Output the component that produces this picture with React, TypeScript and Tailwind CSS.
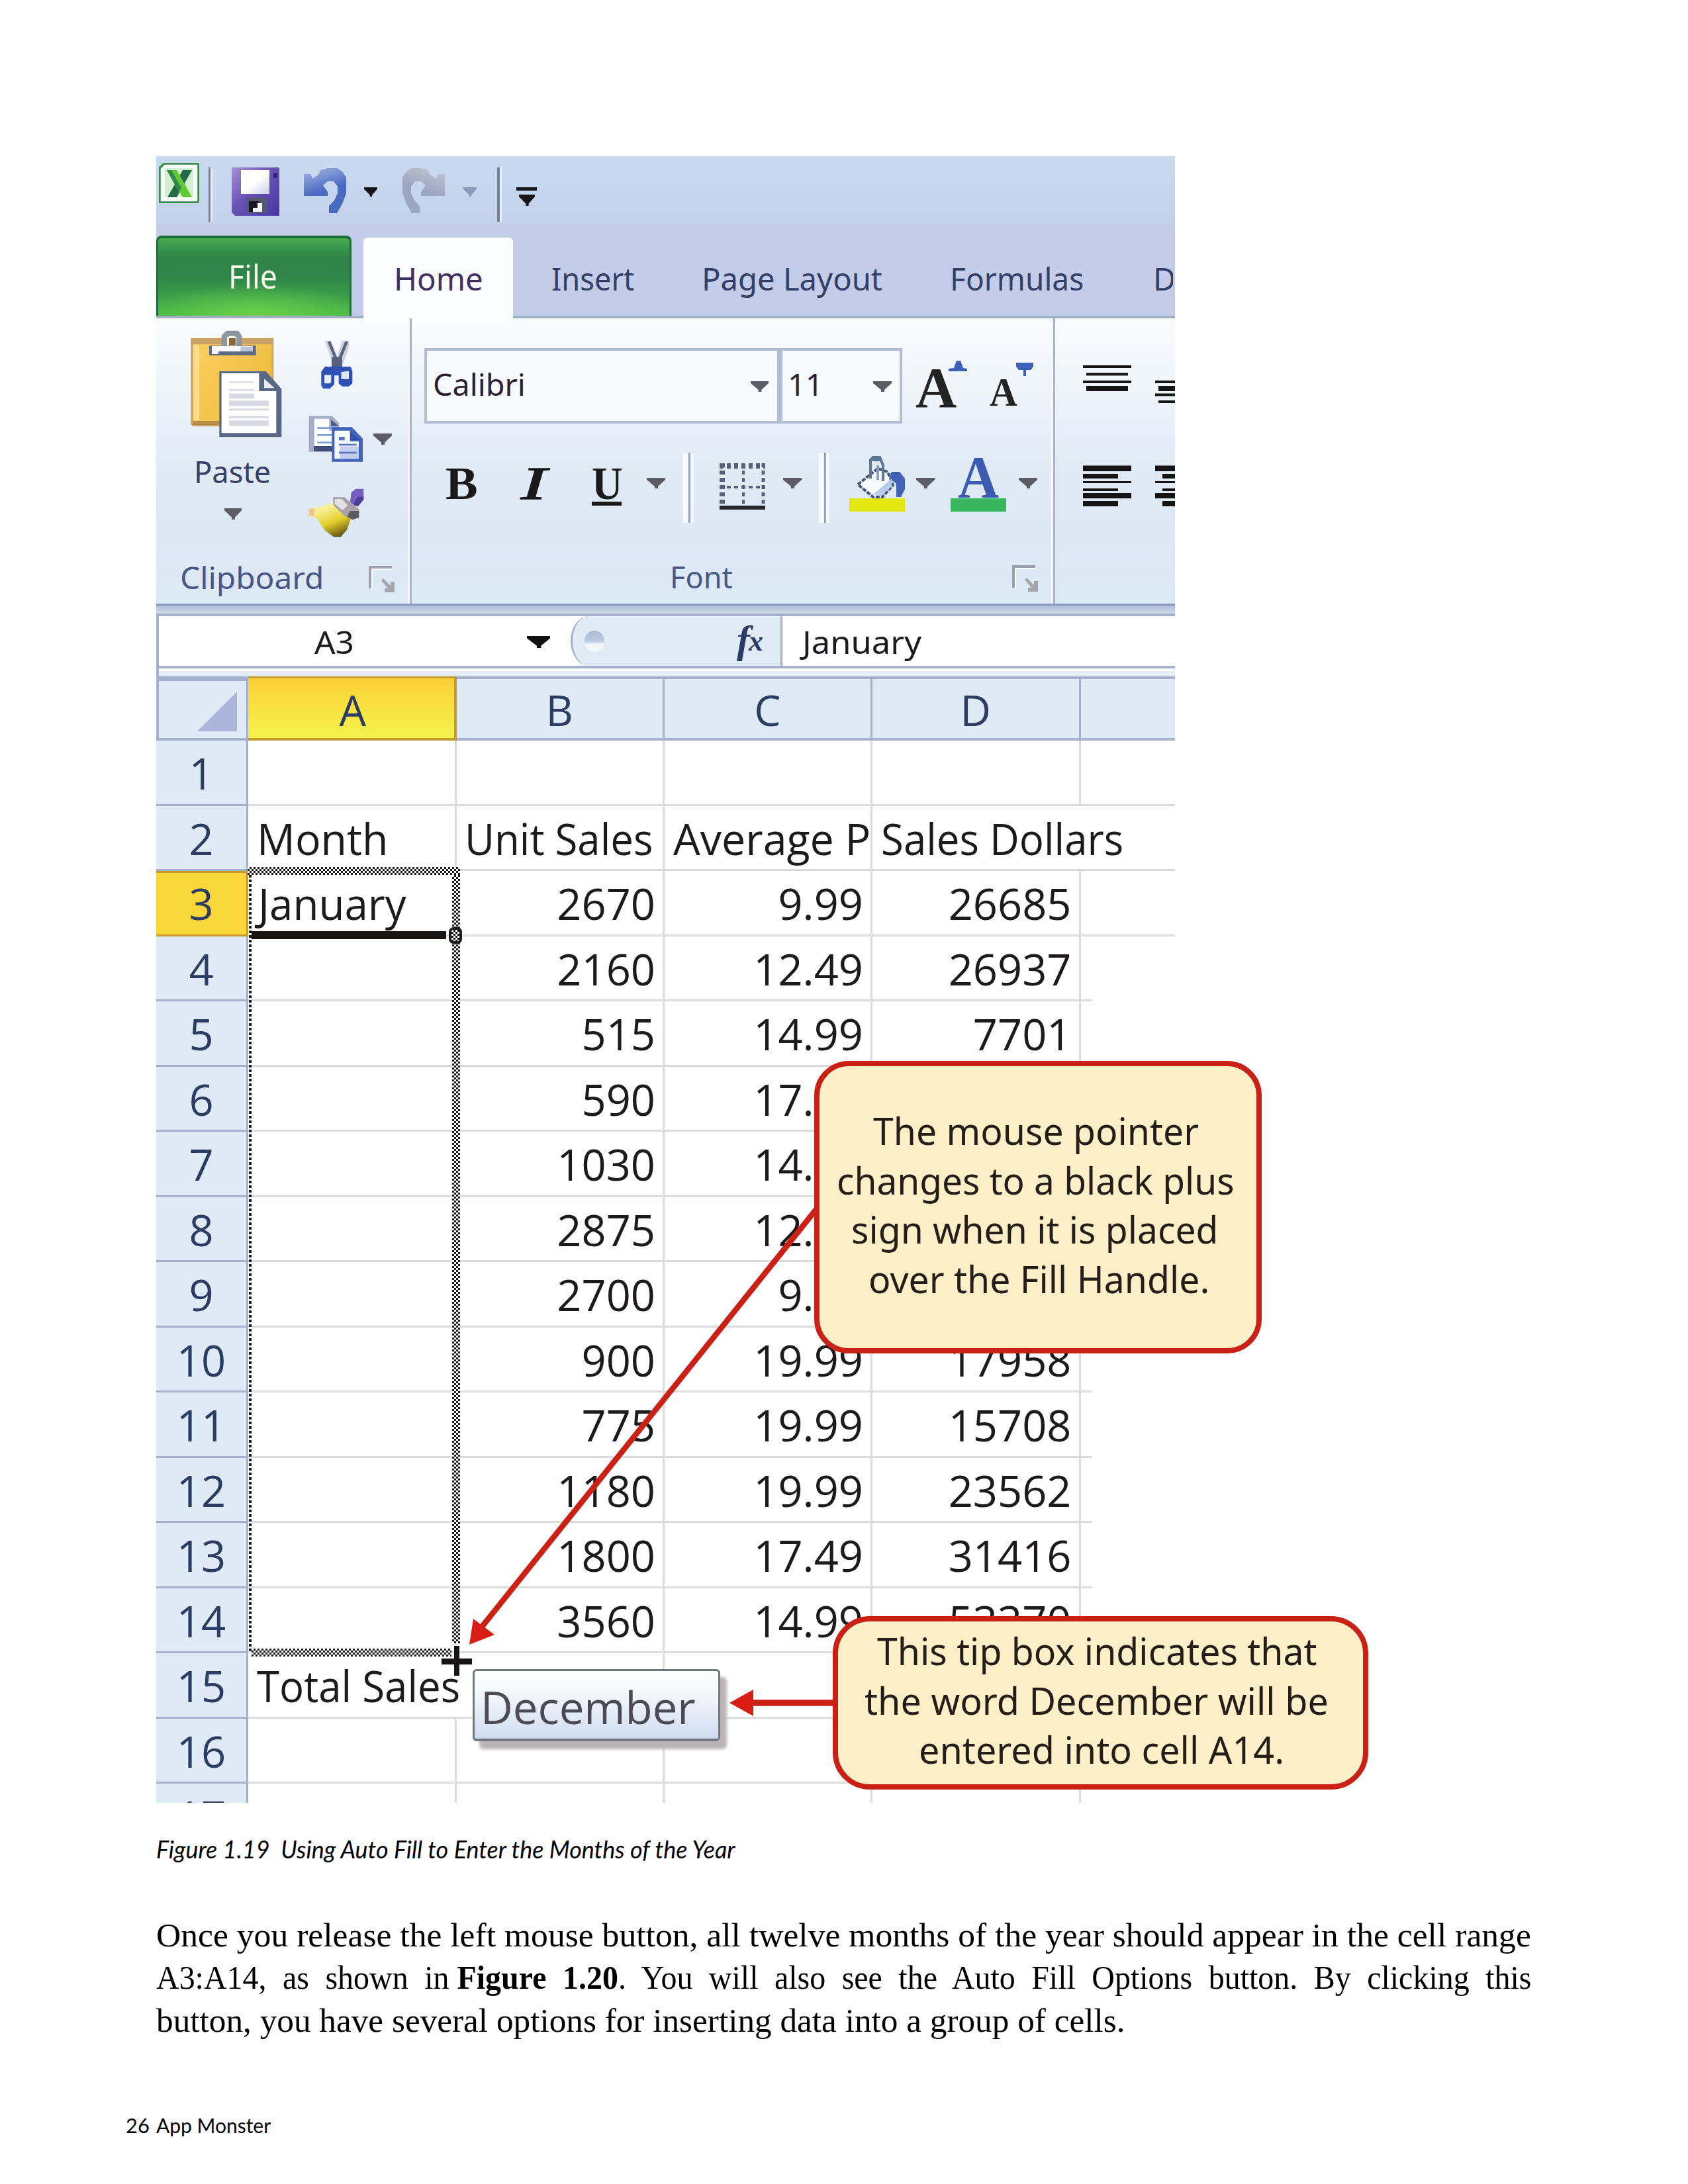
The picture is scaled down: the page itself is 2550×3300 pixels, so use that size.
import { useLayoutEffect, useRef, useState } from "react";
import type { ReactNode } from "react";

/** One line of text that is condensed or widened to fill the width of its box. */
function Fit({ className, children }: { className: string; children: ReactNode }) {
  const box = useRef<HTMLSpanElement>(null);
  const text = useRef<HTMLSpanElement>(null);
  const [scale, setScale] = useState(1);
  useLayoutEffect(() => {
    if (box.current && text.current) {
      setScale(box.current.offsetWidth / text.current.offsetWidth);
    }
  }, []);
  return (
    <span ref={box} className={`block shrink-0 ${className}`}>
      <span
        ref={text}
        className="inline-block origin-left whitespace-nowrap align-top"
        style={{ transform: `scaleX(${scale})` }}
      >
        {children}
      </span>
    </span>
  );
}

function Down({ className }: { className: string }) {
  return (
    <svg className={`shrink-0 ${className}`} viewBox="0 0 28 16" preserveAspectRatio="none" fill="currentColor">
      <path d="M0 0H28V3L17 13V16H12V13L0 3Z" />
    </svg>
  );
}

function Launcher({ className }: { className: string }) {
  return (
    <svg className={`h-[40px] w-[40px] shrink-0 ${className}`} viewBox="0 0 40 40">
      <path d="M2 34V2H35" fill="none" stroke="#9c9fad" strokeWidth="4" />
      <path d="M5 35V5H36" fill="none" stroke="#fff" strokeWidth="2" />
      <path d="M39 24V40H24V34H29L19 22L22 19L33 30V24Z" fill="#a4a5ac" />
    </svg>
  );
}

function ExcelIcon() {
  return (
    <svg className="ml-[4px] mt-[10px] h-[61px] w-[61px] shrink-0" viewBox="0 0 61 61">
      <path d="M8 1H60V60H1V8Z" fill="#f6fdf4" stroke="#3c8c50" strokeWidth="3.5" />
      <rect x="9" y="8" width="43" height="43" fill="#d3efcf" />
      <path d="M36 11H50L27 52H13Z" fill="#236b48" />
      <path d="M12 11H27L50 52H36Z" fill="#62c932" />
      <path d="M12 11H19L34 38L30 44Z" fill="#2f8a4c" />
    </svg>
  );
}

function SaveIcon() {
  return (
    <svg className="ml-[29px] mt-[17px] h-[73px] w-[72px] shrink-0" viewBox="0 0 72 73">
      <defs>
        <linearGradient id="disk" x1="0" y1="0" x2="1" y2="1">
          <stop offset="0" stopColor="#a88fd4" />
          <stop offset="0.45" stopColor="#6a52b4" />
          <stop offset="1" stopColor="#4636a6" />
        </linearGradient>
        <linearGradient id="diskLabel" x1="0" y1="0" x2="1" y2="1">
          <stop offset="0.5" stopColor="#fff" />
          <stop offset="1" stopColor="#cdd0e6" />
        </linearGradient>
      </defs>
      <path d="M0 0H72V73H5L0 68Z" fill="url(#disk)" />
      <rect x="14" y="4" width="43" height="36" fill="url(#diskLabel)" />
      <rect x="63" y="9" width="6" height="7" fill="#2c1f80" />
      <rect x="23" y="46" width="31" height="23" fill="#55586e" />
      <rect x="26" y="51" width="15" height="16" fill="#17171f" />
      <path d="M39 54H46V67H32V61H39Z" fill="#f4f4f8" />
    </svg>
  );
}

function TurnArrow({ light, dark, id, className }: { light: string; dark: string; id: string; className: string }) {
  return (
    <svg className={`h-[68px] w-[65px] shrink-0 ${className}`} viewBox="0 0 65 68">
      <defs>
        <linearGradient id={id} x1="0" y1="0" x2="0.3" y2="1">
          <stop offset="0" stopColor={light} />
          <stop offset="0.6" stopColor={dark} />
        </linearGradient>
      </defs>
      <path
        d="M0 9H10L13 16L22 10L25 3L36 0H50L58 5L64 14V38L58 54L50 68H38V57L46 49L51 38V28L45 20H36L29 26L36 36V42H0Z"
        fill={`url(#${id})`}
      />
    </svg>
  );
}

function PasteIcon() {
  return (
    <svg className="ml-[33px] h-[162px] w-[138px]" viewBox="204 86 414 486">
      <defs>
        <linearGradient id="board" x1="0" y1="0" x2="1" y2="0.6">
          <stop offset="0" stopColor="#fbd061" />
          <stop offset="1" stopColor="#eebb3c" />
        </linearGradient>
      </defs>
      <path d="M205 122H580V522H214L205 512Z" fill="#c9a267" />
      <path d="M215 150H572V497H215Z" fill="url(#board)" />
      <rect x="217" y="152" width="26" height="342" fill="#fcdc8d" />
      <rect x="215" y="497" width="120" height="18" fill="#b98d45" />
      <path d="M288 156H500V200H288Z" fill="#5c6a85" />
      <path d="M300 158H486V182H330V194H300Z" fill="#f5f7fb" />
      <rect x="430" y="160" width="56" height="22" fill="#b9c4dc" />
      <path d="M344 156V110L366 88H420L436 110V156H412V116H368V156Z" fill="#8b969d" />
      <path d="M370 156V120L380 112H402L411 120V156Z" fill="#fff" />
      <rect x="378" y="122" width="30" height="32" fill="#8d6434" />
      <path d="M334 272H545L616 352V570H334Z" fill="#5a6883" />
      <path d="M344 281H514V362H592V552H344Z" fill="#fff" />
      <path d="M537 306L584 348H537Z" fill="#e8edf3" />
      <g fill="#d9d9e3">
        <rect x="378" y="318" width="114" height="7" />
        <rect x="378" y="352" width="114" height="9" />
        <rect x="378" y="373" width="114" height="23" />
        <rect x="378" y="405" width="180" height="24" />
        <rect x="378" y="441" width="180" height="9" />
        <rect x="378" y="475" width="180" height="10" />
        <rect x="378" y="495" width="180" height="25" />
      </g>
    </svg>
  );
}

function ScissorsIcon() {
  return (
    <svg className="ml-[19px] h-[74px] w-[48px]" viewBox="796 130 144 222">
      <path d="M812 132H840L868 206L892 132H922V166L896 236H846L830 180Z" fill="#cfd3dd" />
      <path d="M832 136L868 226M912 136L876 226" stroke="#5c6480" strokeWidth="14" />
      <path d="M844 206H892V250H844Z" fill="#56617c" />
      <path
        fillRule="evenodd"
        d="M814 250H930L938 270V326L922 340H892L876 326V290H856V330L836 350H806L797 336V272ZM812 290V326H838V290ZM888 274V306H922V270Z"
        fill="#2f50b4"
      />
      <rect x="812" y="288" width="30" height="34" fill="#e9eefb" />
      <rect x="888" y="274" width="34" height="30" fill="#dfe6f8" />
    </svg>
  );
}

function CopyIcon() {
  return (
    <svg className="h-[70px] w-[82px]" viewBox="738 472 246 210">
      <path d="M740 474H846L876 506V636H740Z" fill="#a3acc9" />
      <rect x="762" y="610" width="90" height="24" fill="#3f4f79" />
      <path d="M764 486H832V540H862V610H764Z" fill="#fff" />
      <path d="M840 490L876 520H840Z" fill="#53628c" />
      <g fill="#7c9fd8">
        <rect x="778" y="524" width="66" height="8" />
        <rect x="778" y="556" width="66" height="8" />
        <rect x="778" y="590" width="66" height="8" />
      </g>
      <path d="M844 524H934L984 576V681H844Z" fill="#4163bb" />
      <path d="M856 540H926V588H966V668H856Z" fill="#f5f8ff" />
      <path d="M880 612H966V668H880Z" fill="#c3ceef" />
      <path d="M928 546L972 584H928Z" fill="#3151ad" />
      <g fill="#5b72bd">
        <rect x="876" y="568" width="26" height="16" />
        <rect x="876" y="600" width="80" height="8" />
        <rect x="876" y="636" width="80" height="8" />
      </g>
    </svg>
  );
}

function BrushIcon() {
  return (
    <svg className="h-[74px] w-[84px]" viewBox="738 802 252 222">
      <defs>
        <linearGradient id="brush" x1="0.2" y1="0" x2="0.7" y2="1">
          <stop offset="0.2" stopColor="#f8f096" />
          <stop offset="0.6" stopColor="#e3cf2b" />
          <stop offset="1" stopColor="#655414" />
        </linearGradient>
      </defs>
      <path d="M932 820L952 804H988V850L962 884L926 868Z" fill="#7560bd" />
      <path d="M960 840H988V852L962 884L940 876Z" fill="#4c3b9b" />
      <path d="M740 894L800 884L852 866L930 940L912 990L884 1022H852L812 992L776 938L740 926Z" fill="url(#brush)" />
      <rect x="740" y="894" width="24" height="32" fill="#ecc394" />
      <path d="M850 842H900L968 896V934L938 944L900 926L850 876Z" fill="#a8a2a8" />
      <path d="M858 850H890L916 880L892 900L856 872Z" fill="#e3dfe3" />
      <path d="M926 904H966V934L938 944L914 930Z" fill="#5d5b5d" />
    </svg>
  );
}

function BordersIcon() {
  return (
    <svg className="ml-[82px] mt-[16px] h-[70px] w-[69px] shrink-0" viewBox="0 0 69 70">
      <g stroke="#566078" strokeDasharray="6 5" fill="none">
        <path d="M0 4H69" strokeWidth="8" />
        <path d="M0 36H69" strokeWidth="4" />
        <path d="M4 0V62" strokeWidth="8" />
        <path d="M36 0V62" strokeWidth="4" />
        <path d="M66 0V62" strokeWidth="5" />
      </g>
      <rect y="64" width="69" height="6" fill="#25262b" />
    </svg>
  );
}

function BucketIcon() {
  return (
    <svg className="ml-[30px] mt-[5px] h-[84px] w-[84px] shrink-0" viewBox="0 0 84 84">
      <path d="M64 24H76L84 34V50L78 62H71V42L60 32Z" fill="#3f62b8" />
      <path d="M13 43L43 19L58 24L66 44L50 62H36Z" fill="#f8faff" stroke="#43557e" strokeWidth="4" strokeDasharray="6 2" />
      <path d="M36 58L64 34L64 46L48 61Z" fill="#b9cbec" />
      <path d="M32 34V6L36 2H46L51 14V38" fill="none" stroke="#5f7795" strokeWidth="4" />
      <path d="M35 1H46V8H35Z" fill="#5d7794" />
      <path d="M43 14V36" stroke="#8e9fc4" strokeWidth="4" />
      <rect y="64" width="84" height="20" fill="#e5e810" />
    </svg>
  );
}

function LetterA({ className }: { className: string }) {
  return (
    <Fit className={`font-['Liberation_Serif'] font-bold ${className}`}>A</Fit>
  );
}

function AlignTop() {
  return (
    <svg className="h-[60px] w-[139px] shrink-0" viewBox="1636 550 139 60" fill="#151515">
      <path d="M1636 552H1709V556H1636ZM1641 563.500H1704V567.500H1641ZM1636 575H1709V579H1636ZM1641 583H1704V591H1641Z" />
      <path d="M1745 575H1775V579H1745ZM1750 583H1775V591H1750ZM1745 594.500H1775V598.500H1745ZM1750 605H1775V609H1750Z" />
    </svg>
  );
}

function AlignLeft() {
  return (
    <svg className="h-[64px] w-[139px] shrink-0" viewBox="1636 702 139 64" fill="#151515">
      <path d="M1636 703.500H1709V712H1636ZM1636 716H1689V723H1636ZM1636 727H1709V730H1636ZM1636 738H1689V742H1636ZM1636 745H1709V753H1636ZM1636 757H1689V765H1636Z" />
      <path d="M1745 703.500H1775V712H1745ZM1756 716H1775V723H1756ZM1745 727H1775V730H1745ZM1756 738H1775V742H1756ZM1745 745H1775V753H1745ZM1756 757H1775V765H1756Z" />
    </svg>
  );
}

function Separator() {
  return (
    <span className="h-[106px] w-[16px] shrink-0 bg-[linear-gradient(90deg,#f8fbfd_0_7px,#dfe8f5_7px_8px,#98a5c9_8px_11px,#f4f8fc_11px)]" />
  );
}

function TitleBar() {
  return (
    <div className="flex h-[120px] items-start bg-[linear-gradient(#c9daf0_0,#c5d4ed_70px,#c4d0eb_105px,#c3cce8_105px)]">
      <ExcelIcon />
      <span className="ml-[14px] mt-[17px] h-[82px] w-[6px] border-r-[3px] border-[#e8f0fa] bg-[#75809a]" />
      <SaveIcon />
      <TurnArrow id="undo" light="#a5b9e6" dark="#4a69c0" className="ml-[37px] mt-[18px]" />
      <Down className="ml-[26px] mt-[47px] h-[14px] w-[20px] text-[#16161c]" />
      <TurnArrow id="redo" light="#c3c7d3" dark="#9ba6c0" className="ml-[37px] mt-[18px] -scale-x-100" />
      <Down className="ml-[28px] mt-[47px] h-[14px] w-[20px] text-[#8d99b8]" />
      <span className="ml-[31px] mt-[17px] h-[82px] w-[7px] border-r-[3px] border-[#e8f0fa] bg-[#75809a]" />
      <div className="ml-[22px] mt-[47px] flex w-[31px] flex-col items-center gap-[6px]">
        <span className="h-[5px] w-full bg-[#151515]" />
        <Down className="h-[17px] w-[24px] text-[#151515]" />
      </div>
    </div>
  );
}

function Tabs() {
  return (
    <div className="flex h-[125px] items-start border-b-[4px] border-[#9dafc6] bg-[#c3cce8] text-[47px] leading-[130px] text-[#343f68]">
      <div className="h-[121px] w-[295px] shrink-0 rounded-t-[8px] border-x-[3px] border-t-[4px] border-[#1f6c3b] bg-[radial-gradient(ellipse_60%_40%_at_50%_100%,#6ad04a_0%,transparent_100%),linear-gradient(#45ab50_0%,#2f8449_25%,#2f864a_50%,#3c9f49_75%,#49bb47_100%)] pl-[106px] text-[50px] leading-[114px] text-[#f7fbe8]">
        <Fit className="w-[74px]">File</Fit>
      </div>
      <div className="ml-[18px] h-[125px] w-[226px] shrink-0 rounded-t-[8px] border-t-[3px] border-[#c5cde0] bg-[#fafcfe] pl-[46px] leading-[124px] text-[#3f2f62]">
        <Fit className="w-[135px]">Home</Fit>
      </div>
      <Fit className="ml-[58px] w-[125px]">Insert</Fit>
      <Fit className="ml-[102px] w-[273px]">Page Layout</Fit>
      <Fit className="ml-[102px] w-[202px]">Formulas</Fit>
      <span className="ml-[105px] block w-[30px] overflow-hidden">D</span>
    </div>
  );
}

function ClipboardGroup() {
  return (
    <div className="h-full w-[386px] shrink-0 border-r-[3px] border-[#a9b4d4] pt-[18px] shadow-[inset_-3px_0_0_#f4f8fd]">
      <div className="flex h-[352px]">
        <div className="flex w-[230px] shrink-0 flex-col pl-[19px]">
          <PasteIcon />
          <Fit className="ml-[38px] mt-[19px] h-[58px] w-[116px] leading-[65px]">Paste</Fit>
          <Down className="ml-[84px] mt-[30px] h-[17px] w-[26px] text-[#5b5c66]" />
        </div>
        <div className="flex flex-col pt-[15px]">
          <ScissorsIcon />
          <div className="mt-[40px] flex items-start">
            <CopyIcon />
            <Down className="ml-[16px] mt-[27px] h-[17px] w-[28px] text-[#5b5c66]" />
          </div>
          <div className="mt-[40px]">
            <BrushIcon />
          </div>
        </div>
      </div>
      <div className="flex text-[#4a5688]">
        <Fit className="ml-[36px] w-[217px] leading-[42px]">Clipboard</Fit>
        <Launcher className="ml-[68px] mt-[4px]" />
      </div>
    </div>
  );
}

function FontGroup() {
  return (
    <div className="h-full w-[972px] shrink-0 border-r-[3px] border-[#a9b4d4] pt-[45px] shadow-[inset_-3px_0_0_#f4f8fd]">
      <div className="flex items-start pl-[19px]">
        <div className="flex h-[114px] w-[537px] shrink-0 border-[4px] border-[#b3bdd4] bg-[#f8fbfe] pl-[9px] text-[#2c2030]">
          <Fit className="w-[140px] leading-[101px]">Calibri</Fit>
          <Down className="ml-[340px] mt-[46px] h-[16px] w-[27px] text-[#5b5c66]" />
        </div>
        <div className="flex h-[114px] w-[185px] shrink-0 border-[4px] border-[#b3bdd4] bg-[#f8fbfe] pl-[8px] text-[#2c2030]">
          <Fit className="w-[54px] leading-[101px]">11</Fit>
          <Down className="ml-[75px] mt-[46px] h-[16px] w-[28px] text-[#5b5c66]" />
        </div>
        <div className="ml-[20px] flex w-[178px] shrink-0 items-start pt-[19px]">
          <LetterA className="mt-[12px] h-[64px] w-[62px] text-[86px] leading-[58px] text-[#232323]" />
          <svg className="-ml-[12px] h-[16px] w-[28px] shrink-0" viewBox="0 0 28 16">
            <path d="M0 12L8 11L12 0H18L22 11L28 12V16H0Z" fill="#3c5fb8" />
          </svg>
          <LetterA className="ml-[34px] mt-[23px] h-[50px] w-[42px] text-[62px] leading-[48px] text-[#232323]" />
          <svg className="-ml-[2px] mt-[3px] h-[20px] w-[26px] shrink-0" viewBox="0 0 26 20">
            <path d="M0 0H26V6L22 11H15V20H11V11H4L0 6Z" fill="#3c5fb8" />
          </svg>
        </div>
      </div>
      <div className="mt-[44px] flex h-[106px] items-start pl-[51px] font-['Liberation_Serif'] text-[70px] text-[#1a1a1a]">
        <Fit className="w-[49px] font-black leading-[93px]">B</Fit>
        <Fit className="ml-[65px] w-[38px] italic leading-[93px]">
          <span className="[-webkit-text-stroke:1.5px_#1a1a1a]">I</span>
        </Fit>
        <div className="ml-[69px] flex flex-col">
          <Fit className="h-[74px] w-[47px] font-bold leading-[93px]">U</Fit>
          <span className="h-[6px] w-[45px] bg-[#1a1a1a]" />
        </div>
        <Down className="ml-[36px] mt-[38px] h-[16px] w-[28px] text-[#5b5c66]" />
        <span className="ml-[27px] flex">
          <Separator />
        </span>
        <ColourButtons />
      </div>
      <div className="mt-[60px] flex text-[#4a5688]">
        <Fit className="ml-[390px] w-[95px] leading-[42px]">Font</Fit>
        <Launcher className="ml-[422px] mt-[4px]" />
      </div>
    </div>
  );
}

function ColourButtons() {
  return (
    <div className="-ml-[43px] flex shrink-0 items-start">
      <BordersIcon />
      <Down className="ml-[27px] mt-[38px] h-[16px] w-[28px] text-[#5b5c66]" />
      <span className="ml-[26px] flex">
        <Separator />
      </span>
      <BucketIcon />
      <Down className="ml-[17px] mt-[38px] h-[16px] w-[28px] text-[#5b5c66]" />
      <div className="ml-[24px] mt-[5px] flex h-[84px] w-[84px] shrink-0 flex-col items-center justify-between">
        <LetterA className="h-[60px] w-[62px] text-[90px] leading-[66px] text-[#3b5cb2]" />
        <span className="h-[20px] w-full bg-[#3ab55f]" />
      </div>
      <Down className="ml-[19px] mt-[38px] h-[16px] w-[28px] text-[#5b5c66]" />
    </div>
  );
}

function Ribbon() {
  return (
    <div className="flex h-[431px] overflow-hidden bg-[linear-gradient(#fafcfe_0%,#eef4fa_25%,#e1ebf6_50%,#dde8f5_75%,#dceaf5_100%)] text-[46px] text-[#343f68]">
      <ClipboardGroup />
      <FontGroup />
      <div className="flex flex-col gap-[92px] pl-[42px] pt-[69px]">
        <AlignTop />
        <AlignLeft />
      </div>
    </div>
  );
}

function FormulaBar() {
  return (
    <div className="flex h-[83px] border-y-[4px] border-[#a5b0cc] bg-white text-[47px] leading-[78px] text-[#1c1a20]">
      <div className="flex w-[626px] shrink-0 border-l-[4px] border-[#a5b0cc]">
        <Fit className="ml-[235px] w-[60px]">A3</Fit>
        <Down className="ml-[261px] mt-[30px] h-[18px] w-[35px] text-[#111]" />
      </div>
      <div className="flex w-[320px] shrink-0 border-l-[3px] border-r-[3px] border-[#a5b0cc] bg-[#dfecf6] [border-radius:28px_0_0_28px/38px_0_0_38px]">
        <span className="ml-[18px] mt-[22px] h-[32px] w-[30px] rounded-full bg-[linear-gradient(#abb9d4_0%,#bccae2_50%,#f4f8fc_65%)]" />
        <span className="ml-[200px] mt-[-4px] flex font-['Liberation_Serif'] font-bold italic text-[#2b3a66]">
          <span className="text-[60px]">f</span>
          <span className="-ml-[2px] mt-[3px] text-[44px]">x</span>
        </span>
      </div>
      <Fit className="ml-[30px] w-[180px]">January</Fit>
    </div>
  );
}

const COLS = "grid grid-cols-[139px_314.5px_314.5px_314px_314.500px_143px]";

function HeaderRow() {
  return (
    <div className={`${COLS} h-[97px] grid-rows-[97px] bg-[#deebf6] text-center text-[64px] leading-[93px] text-[#2d3c62]`}>
      <div className="flex items-end justify-end border-b-[4px] border-l-[4px] border-r-[3px] border-t-[7px] border-[#a5b0cf] pb-[10px] pr-[14px]">
        <svg className="h-[60px] w-[60px]" viewBox="0 0 60 60">
          <path d="M60 0V60H0Z" fill="#abb5db" />
        </svg>
      </div>
      <div className="border-b-[4px] border-r-[4px] border-t-[3px] border-[#c69a2c] bg-[linear-gradient(#fccf37,#f9e03e_45%,#f2f34d)] pl-[5px] leading-[95px]">A</div>
      <div className="border-b-[4px] border-r-[3px] border-t-[4px] border-[#a5b0cc]">B</div>
      <div className="border-b-[4px] border-r-[3px] border-t-[4px] border-[#a5b0cc]">C</div>
      <div className="border-b-[4px] border-r-[3px] border-t-[4px] border-[#a5b0cc]">D</div>
      <div className="border-b-[4px] border-t-[4px] border-[#a5b0cc]" />
    </div>
  );
}

type Row = { n: number; a?: ReactNode; b?: ReactNode; c?: ReactNode; d?: ReactNode };

const ROWS: Row[] = [
  { n: 1 },
  {
    n: 2,
    a: <Fit className="ml-[13px] w-[198px]">Month</Fit>,
    b: <Fit className="ml-[12px] w-[284px]">Unit Sales</Fit>,
    c: (
      <span className="block w-[311px] overflow-hidden">
        <Fit className="ml-[13px] w-[408px]">Average Price</Fit>
      </span>
    ),
    d: <Fit className="ml-[13px] w-[366px]">Sales Dollars</Fit>,
  },
  { n: 3, a: <Fit className="ml-[15px] w-[224px]">January</Fit>, b: "2670", c: "9.99", d: "26685" },
  { n: 4, b: "2160", c: "12.49", d: "26937" },
  { n: 5, b: "515", c: "14.99", d: "7701" },
  { n: 6, b: "590", c: "17.49", d: "10319" },
  { n: 7, b: "1030", c: "14.99", d: "15440" },
  { n: 8, b: "2875", c: "12.49", d: "35909" },
  { n: 9, b: "2700", c: "9.99", d: "26937" },
  { n: 10, b: "900", c: "19.99", d: "17958" },
  { n: 11, b: "775", c: "19.99", d: "15708" },
  { n: 12, b: "1180", c: "19.99", d: "23562" },
  { n: 13, b: "1800", c: "17.49", d: "31416" },
  { n: 14, b: "3560", c: "14.99", d: "53370" },
  { n: 15, a: <Fit className="ml-[13px] w-[307px]">Total Sales</Fit> },
  { n: 16 },
  { n: 17 },
];

function Cell({ children, open }: { children?: ReactNode; open?: boolean }) {
  return (
    <div
      className={`border-b-[3px] border-[#dedcda] ${open ? "" : "border-r-[3px]"} ${
        typeof children === "string" ? "pr-[11px] text-right" : "text-left"
      }`}
    >
      {children}
    </div>
  );
}

function SheetRow({ row }: { row: Row }) {
  return (
    <div className={`${COLS} h-[98.500px] grid-rows-[98.500px] text-[65px] leading-[98px] text-[#1c1a1c]`}>
      <div
        className={
          row.n === 3
            ? "border-b-[3px] border-r-[3px] border-t-[3px] border-[#c69a2c] bg-[#fad739] text-center leading-[93px] text-[#2d3c62]"
            : "border-b-[3px] border-r-[3px] border-[#a5b0cf] bg-[#deebf6] text-center text-[#2d3c62]"
        }
      >
        {row.n}
      </div>
      <Cell open={row.n === 15}>{row.a}</Cell>
      <Cell>{row.b}</Cell>
      <Cell>{row.c}</Cell>
      <Cell open={row.n === 2}>{row.d}</Cell>
      <div className={`border-[#dedcda] ${row.n <= 3 ? "w-full border-b-[3px]" : "w-[17px] border-b-[3px]"}`} />
    </div>
  );
}

function Selection() {
  return (
    <>
      <div className="absolute left-[138px] top-[1074px] h-[12px] w-[321px] bg-[repeating-conic-gradient(#1c1a1a_0_25%,#fff_0_50%)] bg-[length:6px_6px]" />
      <div className="absolute left-[447px] top-[1086px] h-[1161px] w-[12px] bg-[repeating-conic-gradient(#1c1a1a_0_25%,#fff_0_50%)] bg-[length:6px_6px]" />
      <div className="absolute left-[144px] top-[2255px] h-[12px] w-[302px] bg-[repeating-conic-gradient(#1c1a1a_0_25%,#fff_0_50%)] bg-[length:6px_6px]" />
      <div className="absolute left-[140px] top-[1086px] h-[1175px] w-[4px] bg-[repeating-linear-gradient(#1c1a1a_0_4px,#fff_4px_7px)]" />
      <div className="absolute left-[144px] top-[1171px] h-[12px] w-[294px] bg-[#1a1614]" />
      <div className="absolute left-[442px] top-[1165px] h-[25px] w-[20px] rounded-[7px] border-[4px] border-[#1c1a1a] bg-[repeating-conic-gradient(#1c1a1a_0_25%,#fff_0_50%)] bg-[length:6px_6px]" />
      <div className="absolute left-[431px] top-[2270px] h-[9px] w-[46px] bg-[#151313]" />
      <div className="absolute left-[450px] top-[2251px] h-[45px] w-[8px] bg-[#151313]" />
    </>
  );
}

function TipBox() {
  return (
    <div className="absolute left-[478px] top-[2286px] h-[109px] w-[374px] rounded-[6px] border-[3px] border-b-[4px] border-[#73777e] bg-[linear-gradient(#ffffff_0%,#eef3fa_45%,#cfdcf0_100%)] pl-[9px] text-[68px] leading-[107px] text-[#4b4a55] shadow-[10px_12px_4px_#b9b4b6]">
      <Fit className="w-[325px]">December</Fit>
    </div>
  );
}

function Callouts() {
  return (
    <>
      <svg className="absolute left-0 top-0 h-[2488px] w-[1539px]" viewBox="236 236 1539 2488">
        <path d="M1234 1826L728 2458" stroke="#cc2015" strokeWidth="8.500" />
        <path d="M709 2485L715 2446L747 2470Z" fill="#d81e14" />
        <path d="M1260 2573H1130" stroke="#cc2015" strokeWidth="9.500" />
        <path d="M1102 2573L1138 2553V2593Z" fill="#d81e14" />
      </svg>
      <div className="absolute left-[994px] top-[1367px] flex h-[442px] w-[676px] flex-col items-center rounded-[52px] border-[8px] border-[#cb2016] bg-[#fdefc7] pt-[60px] text-[56px] leading-[74.700px] text-[#251d18]">
        <Fit className="-ml-[7px] w-[492px]">The mouse pointer</Fit>
        <Fit className="-ml-[8px] w-[601px]">changes to a black plus</Fit>
        <Fit className="-ml-[10px] w-[555px]">sign when it is placed</Fit>
        <Fit className="ml-[2px] w-[515px]">over the Fill Handle.</Fit>
      </div>
      <div className="absolute left-[1022px] top-[2206px] flex h-[262px] w-[809px] flex-col items-center rounded-[56px] border-[8px] border-[#cb2016] bg-[#fdefc7] pt-[7px] text-[56px] leading-[74.500px] text-[#251d18]">
        <Fit className="-ml-[11px] w-[665px]">This tip box indicates that</Fit>
        <Fit className="-ml-[13px] w-[701px]">the word December will be</Fit>
        <Fit className="ml-[2px] w-[552px]">entered into cell A14.</Fit>
      </div>
    </>
  );
}

export default function App() {
  return (
    <main className="flex h-[3300px] w-[2550px] flex-col overflow-hidden bg-white pl-[236px] pt-[236px] font-['Noto_Sans',sans-serif]">
      <figure className="relative h-[2488px] w-[1539px]">
        <div className="h-[2488px] overflow-hidden">
          <TitleBar />
          <Tabs />
          <Ribbon />
          <div className="h-[15px] border-t-[4px] border-[#929fc2] bg-[linear-gradient(#b3bfd9,#cfdaeb)]" />
          <FormulaBar />
          <div className="h-[12px] border-l-[4px] border-[#a5b0cc] bg-[linear-gradient(#ffffff_30%,#e4ecf6_30%)]" />
          <div className="font-['Open_Sans',sans-serif]">
            <HeaderRow />
            {ROWS.map((row) => (
              <SheetRow key={row.n} row={row} />
            ))}
          </div>
        </div>
        <Selection />
        <div className="font-['Open_Sans',sans-serif]">
          <TipBox />
        </div>
        <Callouts />
      </figure>
      <p className="mt-[45px] whitespace-pre font-['Lato',sans-serif] text-[37px] italic leading-[50px] text-black">
        <Fit className="w-[875px]">Figure 1.19&nbsp; Using Auto Fill to Enter the Months of the Year</Fit>
      </p>
      <div className="mt-[73px] w-[2077px] font-['Liberation_Serif',serif] text-[50px] leading-[64.300px] text-black">
        <Fit className="w-[2077px]">
          Once you release the left mouse button, all twelve months of the year should appear in the cell range
        </Fit>
        <Fit className="w-[2077px] [word-spacing:13px]">
          A3:A14, as shown in<span className="[word-spacing:0px]"> </span>
          <b>Figure 1.20</b>. You will also see the Auto Fill Options button. By clicking this
        </Fit>
        <Fit className="w-[1463px]">button, you have several options for inserting data into a group of cells.</Fit>
      </div>
      <footer className="-ml-[46px] mt-[106px] flex font-['Lato',sans-serif] text-[30px] leading-[40px] text-black">
        <Fit className="w-[36px]">26</Fit>
        <Fit className="ml-[10px] w-[173px]">App Monster</Fit>
      </footer>
    </main>
  );
}
